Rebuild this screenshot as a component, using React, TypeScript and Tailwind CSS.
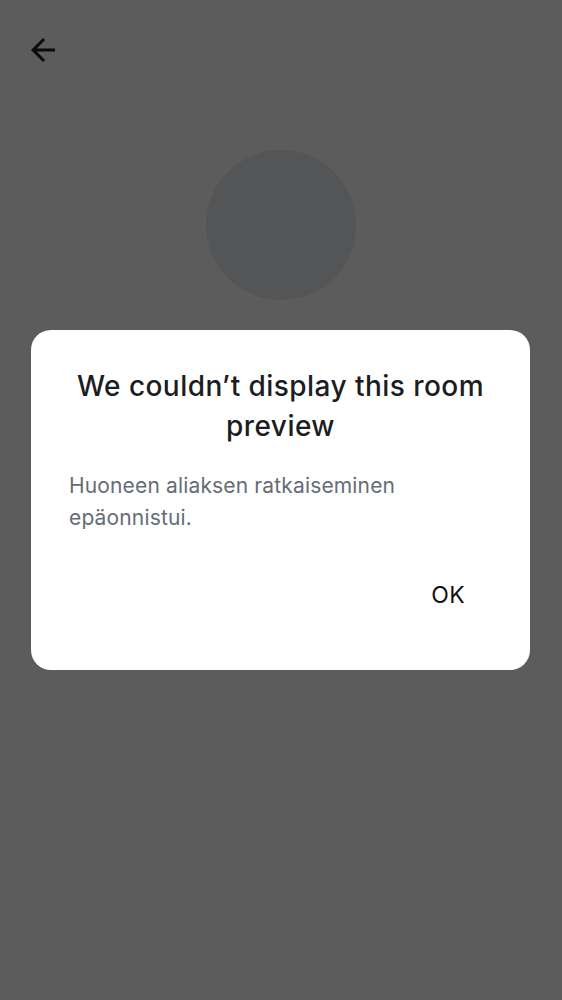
export default function App() {
  return (
    <div className="relative h-[1000px] w-[562px] overflow-hidden bg-[#5c5c5c] font-['Inter',sans-serif]">
      {/* Top bar */}
      <div className="flex h-[100px] items-start px-[25px] pt-[32px]">
        <svg width="36" height="36" viewBox="0 0 24 24" className="text-[#0b0b0b]" fill="currentColor">
          <path d="M20 11H7.83l5.59-5.59L12 4l-8 8 8 8 1.41-1.41L7.83 13H20v-2z" />
        </svg>
      </div>

      {/* Avatar placeholder */}
      <div className="flex justify-center pt-[50px]">
        <div className="h-[150px] w-[150px] rounded-full bg-[#545557]" />
      </div>

      {/* Dialog */}
      <div className="absolute left-[31px] top-[330px] w-[499px] rounded-[20px] bg-white px-[38px] pb-[53px] pt-[36px]">
        <h2 className="text-center text-[28px] font-medium leading-[40px] tracking-[0.45px] text-[#1b1d22]">
          We couldn’t display this room preview
        </h2>
        <p className="mt-[24px] text-[21px] leading-[32px] tracking-[0.15px] text-[#656c76]">
          Huoneen aliaksen ratkaiseminen epäonnistui.
        </p>
        <div className="mt-[39px] flex justify-end">
          <button type="button" className="mr-[21px] h-[44px] px-[6px] text-[23px] leading-[44px] tracking-[0.3px] text-[#111]">
            OK
          </button>
        </div>
      </div>
    </div>
  );
}
